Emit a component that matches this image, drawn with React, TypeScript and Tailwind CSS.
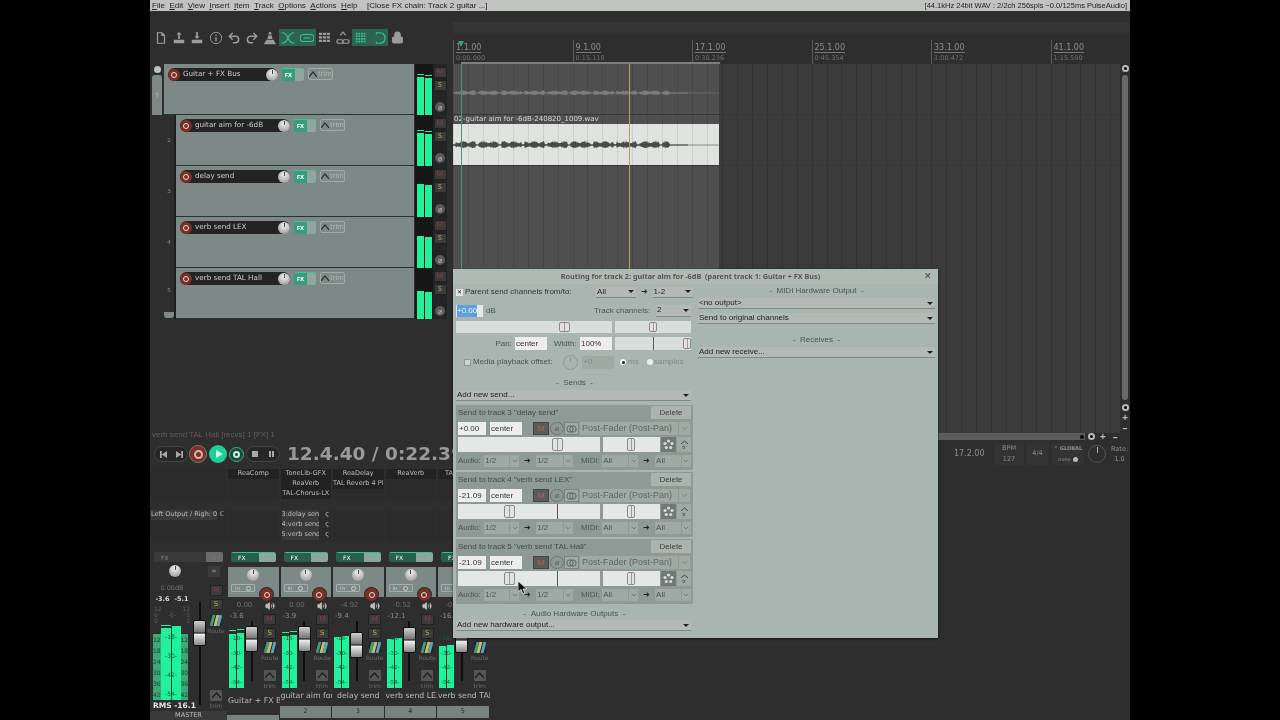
import * as React from 'react';
import { ChevronDown, Undo2, Redo2, Lock, Volume2 } from 'lucide-react';

const menus = ['File', 'Edit', 'View', 'Insert', 'Item', 'Track', 'Options', 'Actions', 'Help'];

const wavePath = (len: number, amp: number, mid: number) => {
  const top: string[] = [];
  const bottom: string[] = [];
  for (let i = 0; i <= len; i += 1) {
    const dip = i % 23 < 3 ? 0.25 : 1;
    const a = i > 216 ? 0.6 : amp * dip * (0.35 + 0.65 * Math.abs(Math.sin(i * 1.37) * Math.cos(i * 0.31)));
    top.push(`${i},${(mid - a).toFixed(1)}`);
    bottom.unshift(`${i},${(mid + a * 0.8).toFixed(1)}`);
  }
  return [...top, ...bottom].join(' ');
};

const Wave = ({ color, amp }: { color: string; amp: number }) => (
  <svg width="266" height="20" viewBox="0 0 266 20">
    <line x1="0" y1="10" x2="266" y2="10" stroke={color} strokeWidth="0.8" opacity="0.7" />
    <polygon points={wavePath(235, amp, 10)} fill={color} />
  </svg>
);

const ToolIcon = ({ d, fill }: { d: string; fill?: boolean }) => (
  <svg width="14" height="14" viewBox="0 0 16 16" fill={fill ? 'currentColor' : 'none'} stroke={fill ? 'none' : 'currentColor'} strokeWidth="1.4">
    <path d={d} />
  </svg>
);

const Tool = ({ children, on }: { children: React.ReactNode; on?: boolean }) => (
  <div className={`flex h-[17px] w-[18.2px] items-center justify-center ${on ? 'bg-[#2c6450] text-[#3fbf96]' : 'text-[#9a9c9a]'}`}>{children}</div>
);

const Toolbar = () => (
  <div className="flex h-[53px] items-start pl-[2px] pt-[18px]">
    <Tool><ToolIcon d="M4 2h5l3 3v9H4z M9 2v3h3" /></Tool>
    <Tool><ToolIcon d="M8 1l3 3H9v5H7V4H5z M2 10h12v4H2z" fill /></Tool>
    <Tool><ToolIcon d="M8 9L5 6h2V1h2v5h2z M2 10h12v4H2z" fill /></Tool>
    <Tool>
      <svg width="14" height="14" viewBox="0 0 16 16" fill="none" stroke="currentColor" strokeWidth="1.1">
        <circle cx="8" cy="8" r="6.5" />
        <path d="M8 7v5M8 4v1.5" strokeWidth="1.6" />
      </svg>
    </Tool>
    <Tool><Undo2 size={14} strokeWidth={2.6} /></Tool>
    <Tool><Redo2 size={14} strokeWidth={2.6} /></Tool>
    <Tool><ToolIcon d="M7 1h2l1 3H6z M6 5h4l1 4H5z M1 15l3-5h8l3 5z" fill /></Tool>
    <Tool on><ToolIcon d="M1 2c5 0 6 4 7 6s2 6 7 6M15 2c-5 0-6 4-7 6s-2 6-7 6" /></Tool>
    <Tool on><ToolIcon d="M4 4h8a4 4 0 010 8H4a4 4 0 010-8zM4 8h8" /></Tool>
    <Tool>
      <svg width="14" height="14" viewBox="0 0 16 16" fill="currentColor">
        {[2, 6, 10].map((y) => [1, 5.5, 10].map((x) => <rect key={`${x}${y}`} x={x} y={y} width="3.6" height="2.6" />))}
      </svg>
    </Tool>
    <Tool><ToolIcon d="M8 1l3 4M8 1L5 5M1 10h5a2 2 0 010 4H3a2 2 0 010-4M10 10h3a2 2 0 010 4h-3a2 2 0 010-4" /></Tool>
    <Tool on>
      <svg width="14" height="14" viewBox="0 0 16 16" fill="currentColor">
        {[2, 5, 8, 11].map((y) => [2, 5, 8, 11].map((x) => <rect key={`${x}${y}`} x={x} y={y} width="2" height="2" />))}
      </svg>
    </Tool>
    <Tool on><ToolIcon d="M5 2h4a5 5 0 010 12H5M5 2v2M5 12v2" /></Tool>
    <Tool><Lock size={13} fill="currentColor" /></Tool>
  </div>
);

const tracks = [
  { n: 1, name: 'Guitar + FX Bus', top: 12, peak: true },
  { n: 2, name: 'guitar aim for -6dB', top: 17, peak: true },
  { n: 3, name: 'delay send', top: 17, peak: false },
  { n: 4, name: 'verb send LEX', top: 18, peak: false },
  { n: 5, name: 'verb send TAL Hall', top: 22, peak: false },
];

const Knob = ({ className }: { className: string }) => (
  <div className={`flex shrink-0 justify-center rounded-full bg-[radial-gradient(circle_at_50%_30%,#f2f2f2,#a6a6a6_75%,#777)] ${className}`}>
    <div className="mt-[1px] h-[4px] w-[1px] bg-[#444]" />
  </div>
);

const Trim = () => (
  <div className="ml-[4px] flex h-[12px] w-[25px] items-center justify-center gap-[1px] rounded-[2px] border border-[#a0aaa6] bg-[#7f8b88] text-[7px] text-[#aeb7b4]">
    <svg width="8" height="6" viewBox="0 0 8 6" fill="none" stroke="#2b2b2b" strokeWidth="1.2"><path d="M0 6l4-5 4 5" /></svg>
    trim
  </div>
);

const TrackFx = () => (
  <div className="ml-[4px] flex h-[13px] w-[22px] overflow-hidden rounded-[2px] border-t border-[#45c596] text-[6px] font-bold text-white">
    <div className="flex w-[13px] items-center justify-center bg-[#3a9c7c]">FX</div>
    <div className="flex flex-1 items-center justify-center bg-[#8fa79e] text-[#54b28f]">◦</div>
  </div>
);

const RecDot = ({ className }: { className: string }) => (
  <div className={`flex shrink-0 items-center justify-center rounded-full bg-[#7c2f28] ${className}`}>
    <div className="h-[6px] w-[6px] rounded-full border-[1.5px] border-[#e8dcd8]" />
  </div>
);

const SmallBtn = ({ children, red }: { children: React.ReactNode; red?: boolean }) => (
  <div className={`flex h-[11px] w-[13px] items-center justify-center border border-[#222] bg-[#3b3b3b] text-[7px] ${red ? 'text-[#933c3c]' : 'text-[#b2ac62]'}`}>{children}</div>
);

const Phase = () => (
  <div className="flex h-[10px] w-[10px] items-center justify-center rounded-full bg-[#595959] text-[7px] leading-none text-[#bbb]">ø</div>
);

const TrackRow = ({ t }: { t: (typeof tracks)[number] }) => {
  const indent = t.n > 1;
  return (
    <div className="flex h-[51px]">
      <div className="flex w-[14px] flex-col items-center">
        {!indent && (
          <>
            <div className="mt-[2px] h-[7px] w-[7px] rounded-full bg-[#bcc2bf]" />
            <div className="mt-[2px] flex w-[10px] flex-1 items-center justify-center rounded-t-[3px] bg-[#7d8986] text-[6px] text-[#c5cbc8]">1</div>
          </>
        )}
      </div>
      {indent && (
        <div className="flex w-[12px] flex-col items-center border-r-2 border-[#1d1d1d] text-[6px] text-[#8a8a8a]">
          <div className="flex flex-1 items-center">{t.n}</div>
          {t.n === 5 && <div className="mb-[1px] h-[6px] w-full rounded-b-[3px] bg-[#7d8986]" />}
        </div>
      )}
      <div className={`flex items-start border-b border-[#2a3230] bg-[#7d8986] pl-[4px] pt-[4px] ${indent ? 'w-[238px]' : 'w-[250px]'}`}>
        <div className="flex h-[13px] w-[110px] items-center rounded-full bg-[#232323] font-['DejaVu_Sans',sans-serif] text-[7.2px] text-[#cdcdcd]">
          <RecDot className="h-[12px] w-[12px]" />
          <span className="ml-[3px] flex-1 whitespace-nowrap">{t.name}</span>
          <Knob className="h-[12px] w-[12px]" />
        </div>
        <TrackFx />
        <Trim />
      </div>
      <div className="ml-[1px] flex w-[18px] items-end justify-center gap-[1px] bg-[#171717] pl-[1px]">
        {[0, 1].map((c) => (
          <div key={c} className="relative w-[7px] bg-[#1ff29a]" style={{ height: 50 - t.top - c }}>
            {t.peak && <div className="absolute left-0 right-0 top-[-3px] h-[1px] bg-[#1ff29a]" />}
          </div>
        ))}
      </div>
      <div className="flex w-[14px] flex-col items-center bg-[#242424] pt-[3px]">
        <SmallBtn red>M</SmallBtn>
        <div className="h-[2px]" />
        <SmallBtn>S</SmallBtn>
        <div className="h-[11px]" />
        <Phase />
      </div>
    </div>
  );
};

const bars = [
  { bar: '1.1.00', time: '0:00.000' },
  { bar: '9.1.00', time: '0:15.118' },
  { bar: '17.1.00', time: '0:30.236' },
  { bar: '25.1.00', time: '0:45.354' },
  { bar: '33.1.00', time: '1:00.472' },
  { bar: '41.1.00', time: '1:15.590' },
];

const Arrange = () => (
  <div className="flex w-[677px] shrink-0 flex-col">
    <div className="mt-[11px] h-[11px] bg-[#353535]" />
    <div className="relative mt-[7px] flex h-[24px] overflow-hidden">
      {bars.map((b) => (
        <div key={b.bar} className="h-[24px] w-[119.5px] shrink-0 border-l border-[#5a5a5a] pl-[2px] pt-[2px] font-['DejaVu_Sans',sans-serif] text-[#8c8c8c]">
          <div className="h-[11px] w-fit border-b border-[#777] text-[8px] leading-[11px]">{b.bar}</div>
          <div className="mt-[1px] text-[6.5px] leading-[9px] text-[#6f6f6f]">{b.time}</div>
        </div>
      ))}
      <div className="absolute left-[5px] top-[1px] h-0 w-0 border-x-[3.5px] border-t-[6px] border-x-transparent border-t-[#3b9c7c]" />
      <div className="absolute bottom-0 left-[8px] h-[2px] w-[259px] bg-[#7d7d7d]" />
    </div>
    <div className="relative flex-1 overflow-hidden bg-[repeating-linear-gradient(90deg,#333_0,#333_1px,#3b3b3b_1px,#3b3b3b_14.94px)]">
      <div className="absolute bottom-0 left-0 top-0 w-[266px] bg-white/10" />
      <div className="relative h-[51px] border-b border-[#363636]">
        <div className="flex h-[50px] w-[266px] items-center pt-[8px]">
          <Wave color="#7c7c7c" amp={3} />
        </div>
      </div>
      <div className="relative h-[51px] border-b border-[#363636]">
        <div className="ml-[1px] h-[9px] whitespace-nowrap font-['DejaVu_Sans',sans-serif] text-[7px] leading-[9px] text-[#d8d8d8]">02-guitar aim for -6dB-240820_1009.wav</div>
        <div className="flex h-[41px] w-[266px] items-center bg-[repeating-linear-gradient(90deg,#cdd0cd_0,#cdd0cd_1px,#dfe2df_1px,#dfe2df_14.94px)]">
          <Wave color="#4a4a4a" amp={4.5} />
        </div>
      </div>
      <div className="absolute bottom-0 left-[8px] top-0 w-[1px] bg-[#3b9c7c]" />
      <div className="absolute bottom-0 left-[176px] top-0 w-[1px] bg-[#b8a15e]" />
      <div className="absolute bottom-0 right-0 top-0 flex w-[10px] flex-col items-center bg-[#2e2e2e] pt-[1px]">
        <div className="h-[7px] w-[7px] rounded-full border-2 border-[#bbb] bg-black" />
        <div className="mt-[3px] h-[325px] w-[6px] rounded-full bg-[#6a6a6a]" />
        <div className="mt-[4px] h-[7px] w-[7px] rounded-full border-2 border-[#bbb] bg-black" />
        <span className="mt-[1px] text-[10px] font-bold leading-[10px] text-[#bbb]">+</span>
        <span className="text-[10px] font-bold leading-[10px] text-[#bbb]">–</span>
      </div>
    </div>
    <div className="flex h-[7px] items-center">
      <div className="flex h-full w-[632px] shrink-0 items-center justify-end bg-[#5c5c5c] pr-[1px]">
        <div className="h-[4px] w-[4px] rounded-full bg-black" />
      </div>
      <div className="ml-[3px] h-[7px] w-[7px] rounded-full border-2 border-[#bbb] bg-black" />
      <span className="ml-[5px] text-[10px] font-bold leading-[7px] text-[#bbb]">+</span>
      <span className="ml-[7px] text-[10px] font-bold leading-[7px] text-[#bbb]">–</span>
    </div>
  </div>
);

const PillBtn = ({ children }: { children: React.ReactNode }) => (
  <div className="flex h-[16px] w-[34px] items-center justify-around rounded-full border border-[#444] bg-[#272727] text-[#a8a8a8]">{children}</div>
);

const Transport = () => (
  <div className="flex h-[28px] items-center pl-[4px] font-['DejaVu_Sans',sans-serif]">
    <PillBtn>
      <svg width="7" height="7" viewBox="0 0 8 8" fill="currentColor"><path d="M0 0h2v8H0zM8 0v8L2 4z" /></svg>
      <svg width="7" height="7" viewBox="0 0 8 8" fill="currentColor"><path d="M8 0H6v8h2zM0 0v8l6-4z" /></svg>
    </PillBtn>
    <div className="ml-[1px] flex h-[18px] w-[18px] items-center justify-center rounded-full border border-[#777] bg-[#7c2f28]">
      <div className="h-[9px] w-[9px] rounded-full border-2 border-[#d8b4ac]" />
    </div>
    <div className="ml-[2px] flex h-[18px] w-[18px] items-center justify-center rounded-full bg-[#1dd09a]">
      <div className="ml-[2px] h-0 w-0 border-y-[4px] border-l-[7px] border-y-transparent border-l-[#d7f5ea]" />
    </div>
    <div className="ml-[2px] flex h-[15px] w-[15px] items-center justify-center rounded-full border border-[#35b28b] bg-[#1c4a3c]">
      <div className="h-[7px] w-[7px] rounded-full border-2 border-[#d8e8e2]" />
    </div>
    <div className="ml-[2px]">
      <PillBtn>
        <div className="h-[6px] w-[6px] bg-[#a8a8a8]" />
        <div className="h-[6px] w-[5px] border-x-2 border-[#a8a8a8]" />
      </PillBtn>
    </div>
    <div className="ml-[7px] w-[200px] whitespace-nowrap text-[18.5px] font-bold text-[#9a9a9a]">12.4.40 / 0:22.39</div>
    <div className="ml-[467px] flex items-center text-[#8f8f8f]">
      <div className="w-[28px] text-[8px]">17.2.00</div>
      <div className="ml-[12px] flex h-[22px] w-[30px] flex-col items-center justify-around rounded-[2px] bg-[#333] text-[6.5px]">
        <span>BPM</span>
        <span>127</span>
      </div>
      <div className="ml-[2px] flex h-[22px] w-[23px] items-center justify-center rounded-[2px] bg-[#333] text-[6.5px]">4/4</div>
      <div className="ml-[3px] flex h-[22px] w-[32px] flex-col items-center justify-around rounded-[2px] bg-[#333] text-[5px]">
        <span className="font-bold">⌃ GLOBAL</span>
        <span className="flex items-center gap-[2px]">none <span className="h-[5px] w-[5px] rounded-full bg-[#bbb]" /></span>
      </div>
      <div className="ml-[4px] flex h-[18px] w-[18px] justify-center rounded-full border border-[#555]">
        <div className="mt-[1px] h-[6px] w-[1px] bg-[#aaa]" />
      </div>
      <div className="ml-[5px] flex flex-col items-center text-[6.5px] leading-[10px]">
        <span>Rate:</span>
        <span>1.0</span>
      </div>
    </div>
  </div>
);

const slotRow = 'flex h-[10px] items-center justify-center whitespace-nowrap overflow-hidden text-[6.5px] text-[#bdbdbd]';

type StripData = {
  name: string;
  num: number;
  vol: string;
  peak: string;
  fill: number;
  capTop: number;
  hasPeak: boolean;
  fx: string[];
  sends?: string[];
};

const strips: StripData[] = [
  { name: 'Guitar + FX Bus', num: 1, vol: '0.00', peak: '-3.6', fill: 54, capTop: 5, hasPeak: true, fx: ['ReaComp'] },
  { name: 'guitar aim for -6dB', num: 2, vol: '0.00', peak: '-3.9', fill: 52, capTop: 5, hasPeak: true, fx: ['ToneLib-GFX', 'ReaVerb', 'TAL-Chorus-LX'], sends: ['3:delay sen', '4:verb send', '5:verb send'] },
  { name: 'delay send', num: 3, vol: '-4.92', peak: '-9.4', fill: 51, capTop: 11, hasPeak: false, fx: ['ReaDelay', 'TAL Reverb 4 Pl'] },
  { name: 'verb send LEX', num: 4, vol: '-0.52', peak: '-12.1', fill: 49, capTop: 6, hasPeak: false, fx: ['ReaVerb'] },
  { name: 'verb send TAL Hall', num: 5, vol: '-0.42', peak: '-16.2', fill: 42, capTop: 6, hasPeak: false, fx: ['TAL Reverb'] },
];

const Slots = ({ fx, sends, master }: { fx: string[]; sends?: string[]; master?: boolean }) => (
  <div className="flex h-[84px] flex-col px-[1px] pt-[1px]">
    {[0, 1, 2].map((i) => (
      <div key={i} className={`${slotRow} ${fx[i] ? 'bg-[#222]' : 'bg-[#2b2b2b]'} ${fx[i] === 'ReaVerb' && sends ? 'text-[#b08a50]' : ''}`}>
        {fx[i] ?? ''}
      </div>
    ))}
    <div className="h-[11px]" />
    {[0, 1, 2].map((i) => (
      <div key={i} className="flex h-[10px] items-center justify-between overflow-hidden whitespace-nowrap bg-[#2b2b2b] pr-[2px] text-[6.5px] text-[#bdbdbd]">
        {master && i === 0 && <><span className="bg-[#3a3a3a]">Left Output / Righ: 0</span><span>ℂ</span></>}
        {sends && <><span className="ml-[1px] w-[37px] overflow-hidden bg-[#3a3a3a]">{sends[i]}</span><span>ς</span></>}
      </div>
    ))}
  </div>
);

const StripFx = ({ on, className }: { on: boolean; className: string }) => (
  <div className={`flex h-[10px] overflow-hidden rounded-[2px] text-[6px] ${on ? 'border-t border-[#2fc28d] text-white' : 'text-[#888]'} ${className}`}>
    <div className={`flex flex-1 items-center pl-[7px] ${on ? 'bg-[#2a5f4d]' : 'bg-[#3a3a3a]'}`}>FX</div>
    <div className={`flex w-[17px] items-center justify-center ${on ? 'bg-[#8da69c] text-[#2fc28d]' : 'bg-[#6b6b6b] text-[#999]'}`}>◦</div>
  </div>
);

const Fader = ({ h, capTop }: { h: number; capTop: number }) => (
  <div className="flex w-[15px] justify-center" style={{ height: h }}>
    <div className="flex w-[2px] justify-center bg-[#0e0e0e]">
      <div className="h-[26px] w-[13px] shrink-0 rounded-[2px] border border-[#111] bg-[linear-gradient(#d0d0d0,#777_45%,#222_50%,#eee_55%,#888)]" style={{ marginTop: capTop }} />
    </div>
  </div>
);

const RouteIcon = () => (
  <div className="flex h-[11px] w-[12px] gap-[1px] overflow-hidden rounded-[1px] bg-[#222] px-[1px] [&>div]:skew-x-[-15deg]">
    <div className="w-[2.5px] bg-[#3a9c7c]" />
    <div className="w-[2.5px] bg-[#c8c060]" />
    <div className="w-[2.5px] bg-[#5aa0c0]" />
  </div>
);

const TrimIcon = () => (
  <div className="flex h-[11px] w-[12px] items-center justify-center rounded-[1px] bg-[#555]">
    <svg width="9" height="7" viewBox="0 0 9 7" fill="none" stroke="#1d1d1d" strokeWidth="1.2"><path d="M0 6l4.5-5L9 6" /></svg>
  </div>
);

const Strip = ({ s }: { s: StripData }) => {
  const folder = s.num === 1;
  return (
    <div className="flex w-[52.5px] flex-col font-['DejaVu_Sans',sans-serif]">
      <Slots fx={s.fx} sends={s.sends} />
      <StripFx on className="mx-[4px]" />
      <div className="mt-[5px] h-[30px] border-l border-r border-[#2b2b2b] bg-[#7d8986] px-[3px] pt-[2px]">
        <Knob className="mx-auto h-[12px] w-[12px]" />
        <div className="mt-[3px] flex h-[8px] w-[24px] items-center justify-around rounded-[1px] border border-[#a5afab] text-[5.5px] text-[#c9d0cd]">
          in <span className="h-[5px] w-[5px] rounded-full border border-[#c9d0cd]" />
        </div>
      </div>
      <div className="relative flex h-[94px]">
        <RecDot className="absolute left-[33px] top-[-9px] h-[13px] w-[13px] ring-1 ring-[#2b2b2b]" />
        <div className="flex w-[33px] flex-col pl-[2px]">
          <div className="h-[14px] pt-[4px] text-center text-[7px] leading-[9px] text-[#6e6e6e]">{s.vol}</div>
          <div className="h-[10px] whitespace-nowrap pl-[1px] text-[7px] leading-[10px] text-[#8c8c8c]">{s.peak}</div>
          <div className="flex h-[67px]">
            <div className="relative flex h-[67px] w-[15px] items-end gap-[1px]">
              {[0, 1].map((c) => (
                <div key={c} className="relative w-[7px] bg-[#1ff29a]" style={{ height: s.fill + c }}>
                  {s.hasPeak && <div className="absolute left-0 right-0 top-[-4px] h-[1px] bg-[#1ff29a]" />}
                </div>
              ))}
              <div className="absolute bottom-[2px] left-0 flex h-[52px] w-[15px] flex-col items-center justify-between text-[5.5px] text-[#155e40]">
                <span>-18-</span><span>-30-</span><span>-42-</span><span>-54-</span>
              </div>
            </div>
            <Fader h={60} capTop={s.capTop} />
          </div>
        </div>
        <div className="flex flex-1 flex-col items-center text-[6px] text-[#6c6c6c]">
          <Volume2 size={10} fill="#bdbdbd" color="#bdbdbd" className="mt-[4px]" />
          <div className="mt-[3px]"><SmallBtn red>M</SmallBtn></div>
          <div className="mt-[3px]"><SmallBtn>S</SmallBtn></div>
          <div className="mt-[3px]"><RouteIcon /></div>
          <span className="leading-[9px]">Route</span>
          <div className="mt-[8px]"><TrimIcon /></div>
          <span className="leading-[9px]">trim</span>
        </div>
      </div>
      <div className={`overflow-hidden whitespace-nowrap px-[1px] text-center text-[7.8px] leading-[10px] text-[#b8b8b8] ${folder ? 'mt-[5px]' : ''}`}>{s.name}</div>
      <div className={`flex items-center justify-center border-r border-[#2b2b2b] bg-[#78837f] text-[6.5px] text-[#2b2b2b] ${folder ? 'mt-[9px] h-[5px]' : 'mt-[5px] h-[12px]'}`}>{folder ? '' : s.num}</div>
    </div>
  );
};

const rmsLabels = ['12', '18', '24', '30', '36', '42'];

const Master = () => (
  <div className="flex w-[77px] flex-col font-['DejaVu_Sans',sans-serif]">
    <Slots fx={[]} master />
    <StripFx on={false} className="mx-[4px]" />
    <div className="flex h-[18px] items-center pl-[19px]">
      <Knob className="h-[12px] w-[12px]" />
      <div className="ml-[27px] flex h-[11px] w-[12px] items-center justify-center rounded-[1px] bg-[#3b3b3b] text-[7px] text-[#9a9a9a]">∞</div>
    </div>
    <div className="flex h-[120px]">
      <div className="flex w-[41px] flex-col pl-[3px] pt-[3px]">
        <div className="h-[11px] text-center text-[6.5px] leading-[11px] text-[#6e6e6e]">0.00dB</div>
        <div className="flex h-[10px] justify-around text-[6.5px] font-bold leading-[10px] text-[#d8d8d8]">
          <span>-3.6</span>
          <span>-5.1</span>
        </div>
        <div className="mt-[2px] flex h-[19px] flex-col px-[1px] text-[6px] leading-[6px] text-[#5e5e5e]">
          <div className="flex justify-between"><span>12</span><span>12</span></div>
          <div className="flex justify-between"><span>6</span><span>-6-</span><span>6</span></div>
          <div className="flex justify-between"><span>0</span><span>0</span></div>
        </div>
        <div className="relative flex h-[75px] items-end">
          <div className="flex h-[66px] w-[7.5px] flex-col items-center justify-around bg-[#3fa877] text-[6px] text-[#14402c]">
            {rmsLabels.map((l) => <span key={l}>{l}</span>)}
          </div>
          <div className="relative h-[72px] w-[10px] bg-[#1ff29a]">
            <div className="absolute left-0 right-0 top-[-3px] h-[1px] bg-[#1ff29a]" />
          </div>
          <div className="relative ml-[1px] h-[74px] w-[9px] bg-[#1ff29a]" />
          <div className="flex h-[66px] w-[7.5px] flex-col items-center justify-around bg-[#3fa877] text-[6px] text-[#14402c]">
            {rmsLabels.map((l) => <span key={l}>{l}</span>)}
          </div>
          <div className="absolute bottom-[2px] left-[8px] flex h-[66px] w-[20px] flex-col items-center justify-between text-[6px] text-[#155e40]">
            <span>-18-</span><span>-30-</span><span>-42-</span><span>-54-</span>
          </div>
        </div>
      </div>
      <div className="ml-[1px] pt-[22px]">
        <Fader h={103} capTop={18} />
      </div>
      <div className="ml-[2px] flex w-[14px] flex-col items-center pt-[5px] text-[6px] text-[#6c6c6c]">
        <SmallBtn red>M</SmallBtn>
        <div className="mt-[3px]"><SmallBtn>S</SmallBtn></div>
        <div className="mt-[5px]"><RouteIcon /></div>
        <span className="leading-[9px]">Route</span>
        <div className="mt-[55px]"><TrimIcon /></div>
        <span className="leading-[9px]">trim</span>
      </div>
    </div>
    <div className="h-[11px] whitespace-nowrap pl-[3px] text-[7.5px] font-bold leading-[11px] text-[#e4e4e4]">RMS -16.1</div>
    <div className="h-[9px] bg-[#3a3a3a] text-center text-[6.5px] leading-[9px] text-[#bbb]">MASTER</div>
  </div>
);

const Combo = ({ label, className }: { label: string; className: string }) => (
  <div className={`flex h-[11px] items-center justify-between border-b border-[#7f8985] bg-[#b3bab6] pl-[1px] pr-[2px] text-[#222] ${className}`}>
    <span className="whitespace-nowrap">{label}</span>
    <div className="h-0 w-0 border-x-[3px] border-t-[3px] border-x-transparent border-t-[#222]" />
  </div>
);

const Field = ({ value, className }: { value: string; className: string }) => (
  <div className={`flex items-center bg-[#eceeed] pl-[1px] text-[#333] ${className}`}>{value}</div>
);

const Thumb = ({ left, narrow }: { left: number; narrow?: boolean }) => (
  <div
    className={`absolute bottom-[1px] top-[1px] flex justify-center rounded-[2px] border border-[#8a8a8a] bg-[#e2e2e2] ${narrow ? 'w-[8px]' : 'w-[11px]'}`}
    style={{ left }}
  >
    <div className="w-[1px] bg-[#999]" />
  </div>
);

const MiniCombo = ({ label, className }: { label: string; className: string }) => (
  <div className={`flex h-[12px] items-center justify-between bg-[#a0aaa5] pl-[1px] text-[#4c5552] ${className}`}>
    <span>{label}</span>
    <span className="flex h-full w-[10px] items-center justify-center border-l border-[#8e9a95]"><ChevronDown size={8} strokeWidth={1.5} /></span>
  </div>
);

const Arrow = () => <span className="mx-[5px] text-[8px] leading-none text-[#222]">➜</span>;

const LinkIcon = () => (
  <svg width="11" height="8" viewBox="0 0 11 8" fill="none" stroke="#5c6562" strokeWidth="1">
    <circle cx="4" cy="4" r="3.2" />
    <circle cx="7" cy="4" r="3.2" />
  </svg>
);

const ReelIcon = () => (
  <svg width="11" height="11" viewBox="0 0 11 11" fill="#d5d9d7">
    {[[5.5, 2], [2, 4.5], [9, 4.5], [3.3, 8.5], [7.7, 8.5]].map(([x, y]) => <circle key={`${x}${y}`} cx={x} cy={y} r="1.6" />)}
  </svg>
);

const sends = [
  { title: 'Send to track 3 "delay send"', vol: '+0.00', thumb: 94, mark: false },
  { title: 'Send to track 4 "verb send LEX"', vol: '-21.09', thumb: 46, mark: true },
  { title: 'Send to track 5 "verb send TAL Hall"', vol: '-21.09', thumb: 46, mark: true },
];

const SendPanel = ({ s }: { s: (typeof sends)[number] }) => (
  <div className="mb-[2px] flex h-[65px] flex-col bg-[#8e9a95] px-[2px]">
    <div className="flex h-[15px] items-center justify-between">
      <span className="text-[#434b48]">{s.title}</span>
      <div className="flex h-[13px] w-[40px] items-center justify-center bg-[#aab3ae] text-[#3c4441]">Delete</div>
    </div>
    <div className="mt-[2px] flex h-[13px] items-center">
      <Field value={s.vol} className="h-[13px] w-[28px]" />
      <Field value="center" className="ml-[4px] h-[13px] w-[32px]" />
      <div className="ml-[11px] flex h-[13px] w-[16px] items-center justify-center border border-[#444] bg-[#5b5b5b] text-[#c25b5b]">M</div>
      <div className="ml-[1px] flex h-[13px] w-[14px] items-center justify-center rounded-full border border-[#6c7672] bg-[#8d9894] text-[#5c6562]">ø</div>
      <div className="flex h-[13px] w-[15px] items-center justify-center border border-[#7b8581] bg-[#a0aaa5]"><LinkIcon /></div>
      <div className="ml-[1px] flex h-[13px] w-[110px] items-center justify-between bg-[#a0aaa5] pl-[2px] text-[9px] text-[#5d6763]">
        <span className="whitespace-nowrap">Post-Fader (Post-Pan)</span>
        <span className="flex h-full w-[12px] items-center justify-center border-l border-[#8e9a95]"><ChevronDown size={9} strokeWidth={1.5} /></span>
      </div>
    </div>
    <div className="mt-[2px] flex h-[15px] items-stretch">
      <div className="relative w-[142px] bg-[#e3e7e5]">
        {s.mark && <div className="absolute bottom-0 left-[99px] top-0 w-[1px] bg-[#555]" />}
        <Thumb left={s.thumb} />
      </div>
      <div className="relative ml-[3px] w-[57px] bg-[#e3e7e5]">
        <Thumb left={24} narrow />
      </div>
      <div className="ml-[1px] flex w-[15px] items-center justify-center bg-[#6f7975]"><ReelIcon /></div>
      <div className="ml-[1px] flex w-[14px] flex-col items-center justify-center bg-[#a0aaa5] text-[6px] leading-[6px] text-[#444]">
        <svg width="7" height="4" viewBox="0 0 7 4" fill="none" stroke="#444" strokeWidth="1"><path d="M0 4l3.5-3L7 4" /></svg>
        tr
      </div>
    </div>
    <div className="mt-[2px] flex h-[13px] items-center text-[#4c5552]">
      <span className="w-[27px]">Audio:</span>
      <MiniCombo label="1/2" className="w-[36px]" />
      <Arrow />
      <MiniCombo label="1/2" className="w-[38px]" />
      <span className="ml-[8px] w-[22px]">MIDI:</span>
      <MiniCombo label="All" className="w-[37px]" />
      <Arrow />
      <MiniCombo label="All" className="w-[37px]" />
    </div>
  </div>
);

const Heading = ({ text, className }: { text: string; className: string }) => (
  <div className={`text-center text-[#4c5552] ${className}`}>-&nbsp;&nbsp;{text}&nbsp;&nbsp;-</div>
);

const RoutingDialog = () => (
  <div className="absolute left-[303px] top-[269px] flex h-[369px] w-[485px] flex-col rounded-t-[3px] bg-[#a9b5b0] font-['Liberation_Sans',sans-serif] text-[8px] shadow-[0_1px_3px_rgba(0,0,0,0.6)]">
    <div className="relative flex h-[15px] items-center justify-center bg-[#b0bab5] pr-[10px] font-['Noto_Sans',sans-serif] text-[7.3px] font-bold text-[#555]">
      <span className="whitespace-pre">Routing for track 2: guitar aim for -6dB  (parent track 1: Guitar + FX Bus)</span>
      <span className="absolute right-[6px] top-[1px] text-[9px] font-normal leading-[12px] text-[#444]">✕</span>
    </div>
    <div className="flex flex-1">
      <div className="ml-[3px] flex w-[237px] flex-col">
        <div className="mt-[2px] flex h-[12px] items-center text-[#333]">
          <div className="flex h-[7px] w-[7px] items-center justify-center bg-[#e4e6e5] text-[6px] leading-none text-[#222]">✕</div>
          <span className="ml-[2px] w-[133px]">Parent send channels from/to:</span>
          <Combo label="All" className="w-[40px]" />
          <Arrow />
          <Combo label="1-2" className="w-[41px]" />
        </div>
        <div className="mt-[6px] flex h-[13px] items-center text-[#4c5552]">
          <div className="flex h-[12px] w-[27px] items-center bg-[#e5e8e6] pl-[1px] text-[#f1f6fb]"><span className="bg-[#5f9fdc]">+0.00</span></div>
          <span className="ml-[3px] w-[108px]">dB</span>
          <span className="w-[62px]">Track channels:</span>
          <Combo label="2" className="h-[12px] w-[35px]" />
        </div>
        <div className="mt-[4px] flex h-[12px]">
          <div className="relative w-[156px] bg-[#d8dedb]"><Thumb left={103} /></div>
          <div className="relative ml-[3px] w-[76px] bg-[#d8dedb]"><Thumb left={34} narrow /></div>
        </div>
        <div className="mt-[4px] flex h-[13px] items-center text-[#4c5552]">
          <span className="w-[56px] text-right">Pan:</span>
          <Field value="center" className="ml-[3px] h-[13px] w-[32px]" />
          <span className="ml-[7px] w-[26px]">Width:</span>
          <Field value="100%" className="h-[13px] w-[32px]" />
          <div className="relative ml-[3px] h-[13px] w-[76px] bg-[#d8dedb]">
            <div className="absolute bottom-0 left-[38px] top-0 w-[1px] bg-[#555]" />
            <Thumb left={68} narrow />
          </div>
        </div>
        <div className="mt-[4px] flex h-[16px] items-center text-[#4c5552]">
          <div className="ml-[8px] h-[7px] w-[7px] border border-[#8d9793] bg-[#cdd3d0]" />
          <span className="ml-[2px] w-[88px] whitespace-nowrap">Media playback offset:</span>
          <div className="ml-[2px] flex h-[15px] w-[15px] justify-center rounded-full border border-[#8d9793]">
            <div className="mt-[1px] h-[5px] w-[1px] bg-[#8d9793]" />
          </div>
          <div className="ml-[4px] flex h-[13px] w-[32px] items-center bg-[#a0aaa5] pl-[1px] text-[#7f8985]">+0</div>
          <div className="ml-[6px] flex h-[6px] w-[6px] items-center justify-center rounded-full bg-[#eee]"><div className="h-[3px] w-[3px] rounded-full bg-[#222]" /></div>
          <span className="ml-[2px] w-[19px] text-[#7f8985]">ms</span>
          <div className="h-[6px] w-[6px] rounded-full bg-[#eee]" />
          <span className="ml-[1px] text-[#7f8985]">samples</span>
        </div>
        <Heading text="Sends" className="mt-[7px] h-[11px] leading-[11px]" />
        <Combo label="Add new send..." className="mt-[2px] w-[235px]" />
        <div className="mt-[4px] flex flex-col">
          {sends.map((s) => <SendPanel key={s.title} s={s} />)}
        </div>
        <Heading text="Audio Hardware Outputs" className="mt-[2px] h-[11px] leading-[11px]" />
        <Combo label="Add new hardware output..." className="mt-[1px] w-[235px]" />
      </div>
      <div className="ml-[5px] flex w-[237px] flex-col">
        <Heading text="MIDI Hardware Output" className="mt-[1px] h-[11px] leading-[11px]" />
        <Combo label="<no output>" className="mt-[2px]" />
        <Combo label="Send to original channels" className="mt-[4px]" />
        <Heading text="Receives" className="mt-[10px] h-[11px] leading-[11px]" />
        <Combo label="Add new receive..." className="mt-[2px]" />
      </div>
    </div>
  </div>
);

export default function App() {
  return (
    <div className="flex h-[720px] w-[1280px] justify-center overflow-hidden bg-black">
      <div className="relative flex w-[980px] flex-col bg-[#2e2e2e] blur-[0.4px]">
        <div className="flex h-[11px] items-center justify-between bg-[#c0c3c0] px-[2px] font-['Liberation_Sans',sans-serif] text-[8px] text-[#222]">
          <div className="flex items-center gap-[4.5px] whitespace-nowrap">
            {menus.map((m) => (
              <span key={m}><u>{m[0]}</u>{m.slice(1)}</span>
            ))}
            <span className="ml-[5px]">[Close FX chain: Track 2 guitar ...]</span>
          </div>
          <span className="mr-[1px] whitespace-nowrap text-[7.5px]">[44.1kHz 24bit WAV : 2/2ch 256spls ~0.0/125ms PulseAudio]</span>
        </div>
        <div className="flex h-[429px]">
          <div className="flex w-[303px] shrink-0 flex-col">
            <Toolbar />
            {tracks.map((t) => <TrackRow key={t.n} t={t} />)}
            <div className="mt-auto h-[10px] whitespace-nowrap pl-[2px] font-['Liberation_Sans',sans-serif] text-[8px] leading-[10px] text-[#5e5e5e]">
              verb send TAL Hall [recvs] 1 [FX] 1
            </div>
          </div>
          <Arrange />
        </div>
        <Transport />
        <div className="flex w-[340px]">
          <Master />
          {strips.map((s) => <Strip key={s.num} s={s} />)}
        </div>
        <RoutingDialog />
        <svg className="absolute left-[368px] top-[581px]" width="10" height="14" viewBox="0 0 10 14">
          <path d="M0 0v11l3-2.5L5 13l2-1-2-4h4z" fill="#111" stroke="#eee" strokeWidth="0.8" />
        </svg>
      </div>
    </div>
  );
}
